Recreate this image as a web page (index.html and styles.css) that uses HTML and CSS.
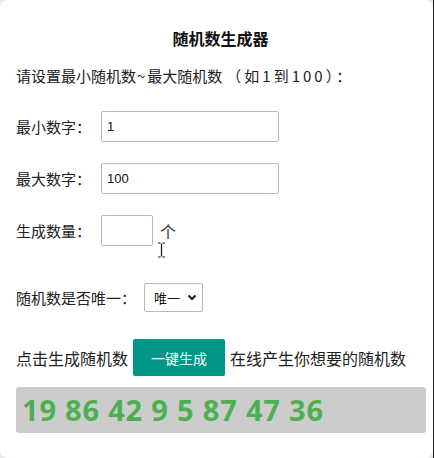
FILE: index.html
```html
<!DOCTYPE html>
<html>
<head>
    <meta charset="utf-8">
    <title>随机数生成器</title>
    <link rel="stylesheet" href="styles.css">
</head>
<body>

<div class="page">
    <h3 class="title">随机数生成器</h3>
    <p class="intro">请设置最小随机数<span class="tilde">~</span>最大随机数<span class="spread">（如1到100）：</span></p>

    <div class="row first">
        <label class="label">最小数字：</label>
        <input class="num-input" type="text" value="1">
    </div>
    <div class="row">
        <label class="label">最大数字：</label>
        <input class="num-input" type="text" value="100">
    </div>
    <div class="row">
        <label class="label">生成数量：</label>
        <input class="num-input small" type="text" value="">
        <span class="unit">个</span>
        <svg class="cursor" width="9" height="16" viewBox="0 0 9 16">
            <path d="M1 1h2.5M5.5 1H8M4.5 1.5v13M1 15h2.5M5.5 15H8" stroke="#111" stroke-width="1.2" fill="none"/>
        </svg>
    </div>
    <div class="row unique-row">
        <label>随机数是否唯一：</label>
        <div class="select-wrap">
            <select class="unique-select">
                <option>唯一</option>
                <option>不唯一</option>
            </select>
            <svg class="chevron" width="10" height="7" viewBox="0 0 10 7">
                <path d="M1.5 1.5l3.5 3.5 3.5-3.5" stroke="#111" stroke-width="2" fill="none"/>
            </svg>
        </div>
    </div>

    <div class="gen-row">
        <span>点击生成随机数</span>
        <button class="gen-btn">一键生成</button>
        <span>在线产生你想要的随机数</span>
    </div>

    <div class="result">19 86 42 9 5 87 47 36</div>
</div>

</body>
</html>
```

FILE: styles.css
```css
html, body {
    margin: 0;
    padding: 0;
}
body {
    width: 433px;
    background: #e4ede4;
    border-right: 1px solid #222;
    font-family: "Noto Sans CJK SC", "Noto Sans", sans-serif;
    color: #222;
    font-size: 15px;
}
.page {
    height: 458px;
    box-sizing: border-box;
    background: white;
    border-radius: 8px;
    padding: 26px 8px 0 16px;
    overflow: hidden;
}
.title {
    margin: 0;
    text-align: center;
    font-size: 16px;
    line-height: 24px;
    font-weight: bold;
    color: #111;
}
.intro {
    margin: 14px 0 0;
    line-height: 24px;
}
.tilde {
    padding: 0 2px 0 1px;
}
.spread {
    letter-spacing: 3px;
    margin-left: 4px;
}
.row {
    display: flex;
    align-items: center;
    margin-top: 21px;
    position: relative;
}
.row.first {
    margin-top: 23px;
}
.label {
    width: 85px;
    flex-shrink: 0;
}
.num-input {
    width: 178px;
    height: 31px;
    box-sizing: border-box;
    border: 1px solid #c4b4aa;
    border-radius: 2px;
    padding: 0 5px;
    font-family: "Liberation Sans", Arial, sans-serif;
    font-size: 13px;
    color: #111;
    outline: none;
}
.num-input.small {
    width: 52px;
}
.unit {
    margin-left: 7px;
    font-size: 16px;
    color: #333;
}
.cursor {
    position: absolute;
    left: 141px;
    top: 27px;
}
.unique-row {
    margin-top: 37px;
    gap: 8px;
}
.select-wrap {
    position: relative;
}
.unique-select {
    -webkit-appearance: none;
    appearance: none;
    width: 59px;
    height: 29px;
    box-sizing: border-box;
    border: 1px solid #c4b4aa;
    border-radius: 2px;
    background: white;
    padding: 0 0 0 9px;
    font-family: "Noto Sans CJK SC", sans-serif;
    font-size: 13px;
    color: #111;
    outline: none;
}
.chevron {
    position: absolute;
    right: 6px;
    top: 11px;
    pointer-events: none;
}
.gen-row {
    display: flex;
    align-items: center;
    gap: 5px;
    margin-top: 27px;
    font-size: 16px;
}
.gen-btn {
    background: #009688;
    color: white;
    border: none;
    border-radius: 2px;
    width: 92px;
    height: 37px;
    font-family: "Noto Sans CJK SC", sans-serif;
    font-size: 14px;
    cursor: pointer;
}
.result {
    margin-top: 11px;
    width: 410px;
    height: 46px;
    box-sizing: border-box;
    background: #cccccc;
    border-radius: 3px;
    padding: 0 6px;
    line-height: 46px;
    font-family: "Noto Sans", sans-serif;
    font-size: 29px;
    font-weight: bold;
    color: #4caf50;
    letter-spacing: 0.8px;
}
```
